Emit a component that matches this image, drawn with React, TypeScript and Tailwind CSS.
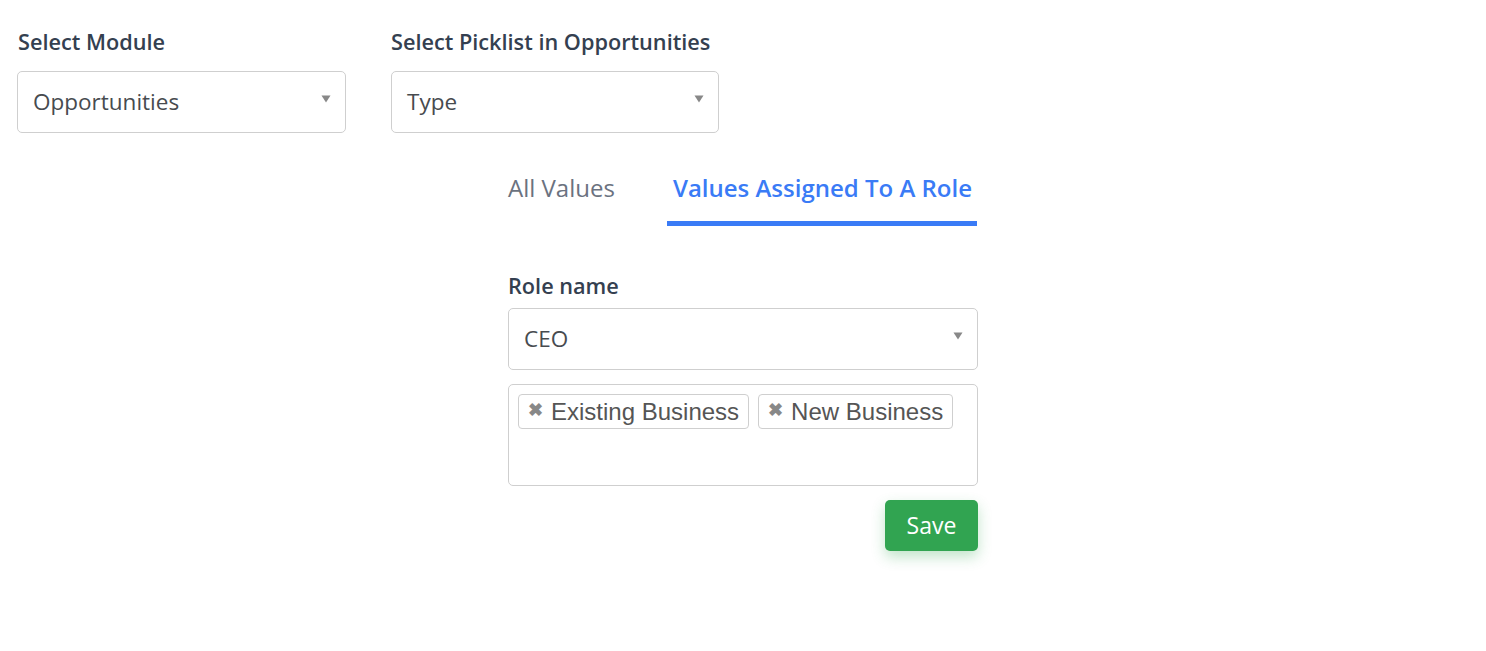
import { useState } from 'react'

const font = "font-['Open_Sans',sans-serif]"

function Caret() {
  return (
    <svg width="10" height="8" viewBox="0 0 10 8" className="shrink-0">
      <path d="M0.5 0.5 L9.5 0.5 L5 7.5 Z" fill="#888" />
    </svg>
  )
}

function SelectBox({ value, className = '' }: { value: string; className?: string }) {
  return (
    <div
      className={`h-[62px] rounded-[5px] border border-[#cfcfcf] bg-white flex items-center justify-between pl-[15px] pr-[14px] ${className}`}
    >
      <span className="text-[22.5px] text-[#474b4f]">{value}</span>
      <div className="-mt-[6px]">
        <Caret />
      </div>
    </div>
  )
}

function Tag({ label }: { label: string }) {
  return (
    <span className="inline-flex items-center h-[35px] rounded-[4px] border border-[#cfcfcf] pl-[9px] pr-[9px] font-['Liberation_Sans',Arial,sans-serif] text-[24px] leading-none text-[#555]">
      <span className="text-[#888] text-[18px] font-bold mr-[8px] -mt-[4px] leading-none">✖</span>
      {label}
    </span>
  )
}

export default function App() {
  const [tab, setTab] = useState<'all' | 'role'>('role')

  return (
    <div className={`min-h-screen bg-white ${font}`}>
      <div className="flex gap-[45px] pl-[17px] pt-[26px]">
        <div className="w-[329px]">
          <label className="block text-[21.7px] font-semibold text-[#344050] mb-[12px] pl-px">
            Select Module
          </label>
          <SelectBox value="Opportunities" />
        </div>
        <div className="w-[328px]">
          <label className="block text-[21.7px] font-semibold text-[#344050] mb-[12px]">
            Select Picklist in Opportunities
          </label>
          <SelectBox value="Type" />
        </div>
      </div>

      <div className="w-[470px] mx-auto mt-[37px]">
        <div className="flex justify-between items-end pr-px">
          <button
            onClick={() => setTab('all')}
            className={`pb-[15px] text-[24px] border-b-[5px] ${
              tab === 'all' ? 'text-[#3a7bf6] font-semibold border-[#3a7bf6]' : 'text-[#6b7280] border-transparent'
            }`}
          >
            All Values
          </button>
          <button
            onClick={() => setTab('role')}
            className={`pl-[6px] pr-[5px] pb-[15px] text-[24px] border-b-[5px] ${
              tab === 'role' ? 'text-[#3a7bf6] font-semibold border-[#3a7bf6]' : 'text-[#6b7280] border-transparent'
            }`}
          >
            Values Assigned To A Role
          </button>
        </div>

        <label className="block mt-[44px] text-[21.7px] font-semibold text-[#344050] mb-[6px]">
          Role name
        </label>
        <SelectBox value="CEO" />

        <div className="mt-[14px] h-[102px] rounded-[5px] border border-[#cfcfcf] p-[9px] flex flex-wrap content-start gap-[9px]">
          <Tag label="Existing Business" />
          <Tag label="New Business" />
        </div>

        <div className="flex justify-end mt-[14px]">
          <button className="w-[93px] h-[51px] rounded-[5px] bg-[#31a451] text-white text-[23px] shadow-[0_6px_14px_rgba(49,164,81,0.3)]">
            Save
          </button>
        </div>
      </div>
    </div>
  )
}
